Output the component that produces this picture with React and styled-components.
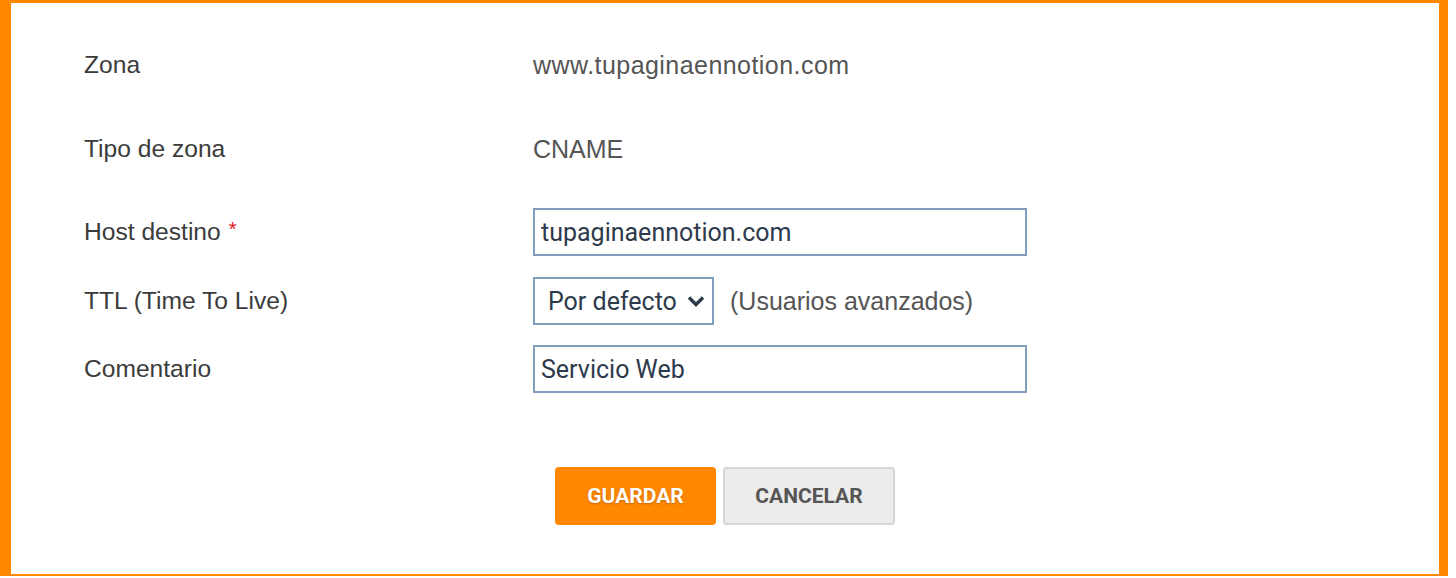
import React from 'react'
import styled, { createGlobalStyle } from 'styled-components'

const GlobalStyle = createGlobalStyle`
  html, body {
    margin: 0;
    padding: 0;
    background: #ffffff;
  }
  * { box-sizing: border-box; }
`

const Frame = styled.div`
  width: 1448px;
  height: 576px;
  border-style: solid;
  border-color: #ff8800;
  border-width: 3px 9px 2px 11px;
  background: #fff;
  padding: 38px 0 0 73px;
  font-family: "Liberation Sans", Arial, Helvetica, sans-serif;
`

const Form = styled.form`
  display: flex;
  flex-direction: column;
`

const Row = styled.div`
  display: grid;
  grid-template-columns: 449px 494px;
  align-items: center;
  min-height: 48px;
  margin-bottom: ${p => p.$gap}px;
`

const Label = styled.label`
  font-size: 24.6px;
  color: #3b3b3b;
`

const Required = styled.span`
  color: #e8141a;
  font-size: 20px;
  margin-left: 8px;
  vertical-align: 4px;
`

const Value = styled.div`
  font-size: 25px;
  color: #555555;
  letter-spacing: ${p => p.$spacing || 0}px;
`

const TextInput = styled.input`
  width: 494px;
  height: 48px;
  border: 2px solid #7f9dbd;
  border-radius: 0;
  padding: 0 6px;
  font-family: Roboto, "Liberation Sans", sans-serif;
  font-size: 25px;
  color: #2d3a4b;
  outline: none;
  background: #fff;
`

const Inline = styled.div`
  display: flex;
  align-items: center;
  gap: 16px;
`

const SelectWrap = styled.div`
  position: relative;
  width: 181px;
  height: 48px;
`

const Select = styled.select`
  appearance: none;
  -webkit-appearance: none;
  width: 100%;
  height: 100%;
  border: 2px solid #7f9dbd;
  border-radius: 0;
  background: #fff;
  padding: 0 30px 0 13px;
  font-family: Roboto, "Liberation Sans", sans-serif;
  font-size: 25px;
  color: #2d3a4b;
  outline: none;
`

const Chevron = styled.svg`
  position: absolute;
  right: 8px;
  top: 17px;
  pointer-events: none;
`

const Hint = styled.span`
  font-size: 25px;
  color: #555555;
`

const Actions = styled.div`
  display: flex;
  gap: 7px;
  margin-top: 74px;
  margin-left: 471px;
`

const Button = styled.button`
  height: 58px;
  width: ${p => p.$w}px;
  border-radius: 4px;
  font-family: Roboto, "Liberation Sans", sans-serif;
  font-weight: 700;
  font-size: 21px;
  cursor: pointer;
  background: ${p => (p.$primary ? '#ff8800' : '#ececec')};
  color: ${p => (p.$primary ? '#ffffff' : '#555555')};
  border: ${p => (p.$primary ? 'none' : '2px solid #d6d6d6')};
  text-shadow: ${p => (p.$primary ? '0 1px 2px rgba(120,60,0,0.45)' : 'none')};
`

const App = () => {
  return (
    <>
      <GlobalStyle />
      <Frame>
        <Form onSubmit={e => e.preventDefault()}>
          <Row $gap={36}>
            <Label>Zona</Label>
            <Value $spacing={0.45}>www.tupaginaennotion.com</Value>
          </Row>
          <Row $gap={35}>
            <Label>Tipo de zona</Label>
            <Value>CNAME</Value>
          </Row>
          <Row $gap={21}>
            <Label>
              Host destino<Required>*</Required>
            </Label>
            <TextInput defaultValue="tupaginaennotion.com" />
          </Row>
          <Row $gap={20}>
            <Label>TTL (Time To Live)</Label>
            <Inline>
              <SelectWrap>
                <Select defaultValue="default">
                  <option value="default">Por defecto</option>
                </Select>
                <Chevron width="20" height="14" viewBox="0 0 20 14">
                  <path d="M3 3.5 L10 10.5 L17 3.5" fill="none" stroke="#2d3a4b" strokeWidth="3.4" />
                </Chevron>
              </SelectWrap>
              <Hint>(Usuarios avanzados)</Hint>
            </Inline>
          </Row>
          <Row $gap={0}>
            <Label>Comentario</Label>
            <TextInput defaultValue="Servicio Web" />
          </Row>
          <Actions>
            <Button $primary $w={161}>GUARDAR</Button>
            <Button $w={172}>CANCELAR</Button>
          </Actions>
        </Form>
      </Frame>
    </>
  )
}

export default App
